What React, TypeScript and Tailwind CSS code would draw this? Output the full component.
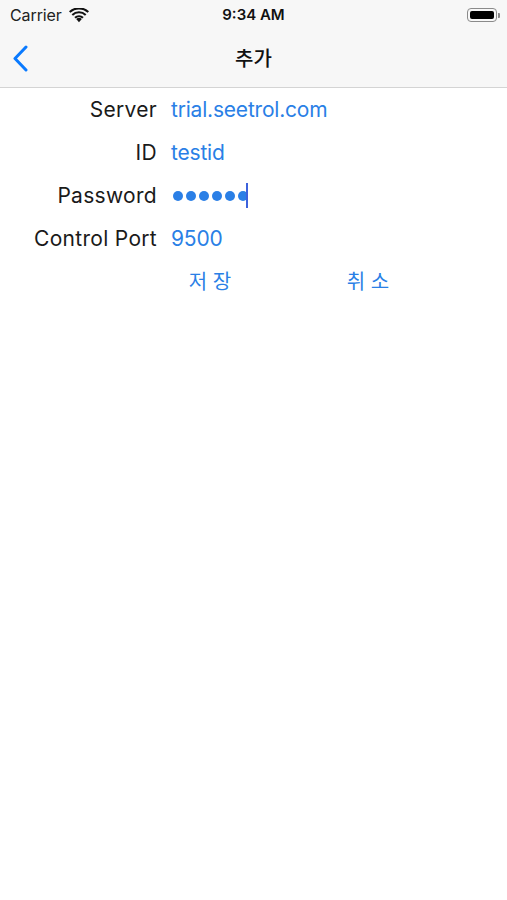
import React from "react";

const BLUE = "#2a7fe6";

function Wifi() {
  return (
    <svg width="20" height="15" viewBox="0 0 20 15" className="block">
      <path d="M10 14.2 L7.2 11.1 A4.2 4.2 0 0 1 12.8 11.1 Z" fill="#111" />
      <path d="M5.3 9.1 A6.9 6.9 0 0 1 14.7 9.1 L13.3 10.6 A4.9 4.9 0 0 0 6.7 10.6 Z" fill="#111" />
      <path d="M2.6 6.2 A10.8 10.8 0 0 1 17.4 6.2 L16 7.7 A8.8 8.8 0 0 0 4 7.7 Z" fill="#111" />
      <path d="M0 3.3 A14.6 14.6 0 0 1 20 3.3 L18.6 4.8 A12.6 12.6 0 0 0 1.4 4.8 Z" fill="#111" />
    </svg>
  );
}

function Battery() {
  return (
    <div className="flex items-center">
      <div className="w-[30px] h-[14px] rounded-[4px] border border-[#8a8a8a] p-[2px] box-border">
        <div className="w-full h-full rounded-[2px] bg-black" />
      </div>
      <div className="w-[2px] h-[5px] rounded-r-[1px] bg-[#8a8a8a] ml-[1px]" />
    </div>
  );
}

export default function App() {
  const rows: [string, React.ReactNode][] = [
    ["Server", "trial.seetrol.com"],
    ["ID", "testid"],
    [
      "Password",
      <div className="flex items-center h-[25px] ml-[2px]">
        <div className="flex items-center gap-[3px]">
          {[0, 1, 2, 3, 4, 5].map((i) => (
            <span key={i} className="block w-[10px] h-[10px] rounded-full" style={{ background: BLUE }} />
          ))}
        </div>
        <span className="block w-[2px] h-[25px] bg-[#3d62dc] -ml-[2px]" />
      </div>,
    ],
    ["Control Port", "9500"],
  ];
  return (
    <div
      className="w-[507px] h-[900px] bg-white overflow-hidden"
      style={{ fontFamily: "Inter, 'Noto Sans CJK KR', sans-serif" }}
    >
      <div className="bg-[#f7f7f7] border-b border-[#d4d4d4]">
        <div className="h-[30px] flex items-center justify-between pl-[10px] pr-[7px] relative">
          <div className="flex items-center gap-[7px]">
            <span className="text-[16px] text-[#222] tracking-[-0.1px]">Carrier</span>
            <Wifi />
          </div>
          <span className="absolute left-0 right-0 text-center text-[15px] font-semibold text-[#111]">9:34 AM</span>
          <Battery />
        </div>
        <div className="h-[57px] flex items-center relative">
          <svg width="17" height="27" viewBox="0 0 17 27" className="ml-[12px] block">
            <path d="M14 2 L3 13.5 L14 25" fill="none" stroke="#0a7aff" strokeWidth="3" strokeLinecap="round" strokeLinejoin="round" />
          </svg>
          <span className="absolute left-0 right-0 text-center text-[20px] font-medium text-[#111]">추가</span>
        </div>
      </div>
      <div className="flex flex-col">
        {rows.map(([label, value], i) => (
          <div key={i} className="h-[43px] flex items-center">
            <div className="w-[157px] text-right text-[21px] text-[#1a1a1a] tracking-[0.3px]">{label}</div>
            <div className="ml-[14px] text-[21px] tracking-[-0.2px]" style={{ color: BLUE }}>
              {value}
            </div>
          </div>
        ))}
        <div className="h-[43px] flex items-center pl-[131px]">
          <div className="w-[158px] text-center text-[20px]" style={{ color: BLUE }}>
            저 장
          </div>
          <div className="w-[158px] text-center text-[20px]" style={{ color: BLUE }}>
            취 소
          </div>
        </div>
      </div>
    </div>
  );
}
